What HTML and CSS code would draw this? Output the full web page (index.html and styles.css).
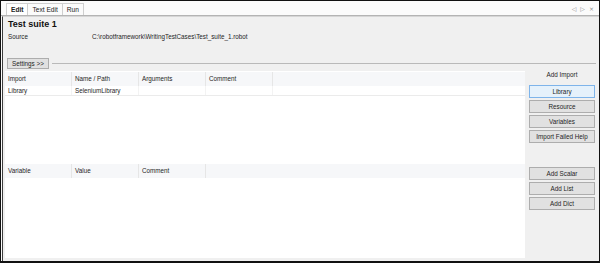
FILE: index.html
```html
<!DOCTYPE html>
<html lang="en">

<head>
    <meta charset="UTF-8" />
    <title>Test suite 1 – RIDE</title>
    <link rel="stylesheet" href="styles.css">
</head>

<body>
    <div class="window">
        <div class="tabbar">
            <div class="tabs">
                <span class="tab active">Edit</span>
                <span class="tab">Text Edit</span>
                <span class="tab">Run</span>
            </div>
            <div class="tab-nav">
                <span>◁</span>
                <span>▷</span>
                <span>×</span>
            </div>
        </div>

        <div class="panel">
            <h1 class="suite-title">Test suite 1</h1>

            <div class="source-row">
                <span class="source-label">Source</span>
                <span class="source-path">C:\robotframework\WritingTestCases\Test_suite_1.robot</span>
            </div>

            <div class="settings-row">
                <button class="btn settings-btn">Settings &gt;&gt;</button>
                <span class="rule"></span>
            </div>

            <div class="editor">
                <section class="pane pane-imports">
                    <div class="grid">
                        <div class="grid-head">
                            <span class="cell">Import</span>
                            <span class="cell">Name / Path</span>
                            <span class="cell">Arguments</span>
                            <span class="cell">Comment</span>
                        </div>
                        <div class="grid-row">
                            <span class="cell">Library</span>
                            <span class="cell">SeleniumLibrary</span>
                            <span class="cell"></span>
                            <span class="cell"></span>
                        </div>
                    </div>
                    <div class="side">
                        <div class="side-label">Add Import</div>
                        <button class="btn side-btn focused">Library</button>
                        <button class="btn side-btn">Resource</button>
                        <button class="btn side-btn">Variables</button>
                        <button class="btn side-btn">Import Failed Help</button>
                    </div>
                </section>

                <section class="pane pane-vars">
                    <div class="grid">
                        <div class="grid-head">
                            <span class="cell">Variable</span>
                            <span class="cell">Value</span>
                            <span class="cell">Comment</span>
                        </div>
                    </div>
                    <div class="side">
                        <button class="btn side-btn">Add Scalar</button>
                        <button class="btn side-btn">Add List</button>
                        <button class="btn side-btn">Add Dict</button>
                    </div>
                </section>
            </div>

            <div class="bottom-strip"></div>
        </div>
    </div>
</body>

</html>
```

FILE: styles.css
```css
*,
*::before,
*::after {
    box-sizing: border-box;
    margin: 0;
    padding: 0;
}

html,
body {
    width: 600px;
    height: 263px;
    overflow: hidden;
    background: #fff;
    font-family: 'Liberation Sans', Arial, sans-serif;
    font-size: 6.3px;
    color: #1e1e1e;
}

.window {
    display: flex;
    flex-direction: column;
    width: 600px;
    height: 263px;
    border: 1px solid #111;
    border-bottom-width: 2px;
    background: #fbfbfb;
}

/* tab strip */

.tabbar {
    display: flex;
    justify-content: space-between;
    align-items: flex-end;
    height: 15px;
    padding-left: 5px;
    border-bottom: 1px solid #b4b4b4;
}

.tabs {
    display: flex;
}

.tab {
    height: 12px;
    line-height: 11px;
    padding: 0 4px;
    border: 1px solid #cfcfcf;
    border-bottom: none;
    border-left: none;
    color: #222;
    font-size: 6.6px;
}

.tab.active {
    border-left: 1px solid #cfcfcf;
    background: #fff;
    font-weight: bold;
}

.tab-nav {
    display: flex;
    gap: 4px;
    align-self: center;
    padding-right: 5px;
    font-family: 'DejaVu Sans', sans-serif;
    font-size: 6px;
    color: #8c8c8c;
}

/* main panel */

.panel {
    flex: 1;
    display: flex;
    flex-direction: column;
    margin-left: 1px;
    padding: 0 2px 0 2px;
    border-left: 1px solid #3d3d3d;
    border-top: 1px solid #d6d6d6;
    background: #f0f0f0;
}

.suite-title {
    margin-top: 2px;
    padding-left: 3px;
    height: 11px;
    line-height: 11px;
    font-size: 9px;
    font-weight: bold;
    color: #111;
}

.source-row {
    display: flex;
    margin-top: 3px;
    padding-left: 3px;
    height: 8px;
    line-height: 8px;
}

.source-label {
    width: 84px;
}

.settings-row {
    display: flex;
    align-items: center;
    gap: 3px;
    margin-top: 17px;
    padding-left: 2px;
    padding-right: 1px;
}

.rule {
    flex: 1;
    height: 1px;
    background: #b9b9b9;
}

.btn {
    display: block;
    height: 13px;
    border: 1px solid #adadad;
    background: #e1e1e1;
    font-family: inherit;
    font-size: 6.3px;
    color: #1e1e1e;
    text-align: center;
}

.settings-btn {
    width: 42px;
    height: 11px;
    padding-left: 4px;
    text-align: left;
}

/* grids */

.editor {
    flex: 1;
    display: flex;
    flex-direction: column;
    margin-top: 2px;
}

.pane {
    flex: 1;
    display: flex;
}

.grid {
    flex: 1;
    background: #fff;
}

.pane-imports .grid {
    padding-top: 1px;
}

.grid-head,
.grid-row {
    display: flex;
}

.grid-head {
    height: 14px;
    line-height: 14px;
    background: #f6f7f9;
}

.grid-row {
    height: 10px;
    line-height: 9px;
    border-bottom: 1px solid #ebebeb;
}

.cell {
    width: 67px;
    padding-left: 3px;
    border-right: 1px solid #e6e6e6;
    white-space: nowrap;
}

.grid-row .cell {
    border-right-color: #f3f3f3;
}

.pane-vars .grid-head {
    margin-top: -1px;
}

.side {
    display: flex;
    flex-direction: column;
    gap: 2px;
    width: 72px;
    padding-left: 4px;
    padding-right: 2px;
}

.side-label {
    height: 8px;
    line-height: 8px;
    margin-bottom: 4px;
    text-align: center;
}

.pane-vars .side {
    padding-top: 2px;
}

.side-btn.focused {
    border-color: #7eb4ea;
    background: #e5f1fb;
}

.bottom-strip {
    height: 3px;
}
```
